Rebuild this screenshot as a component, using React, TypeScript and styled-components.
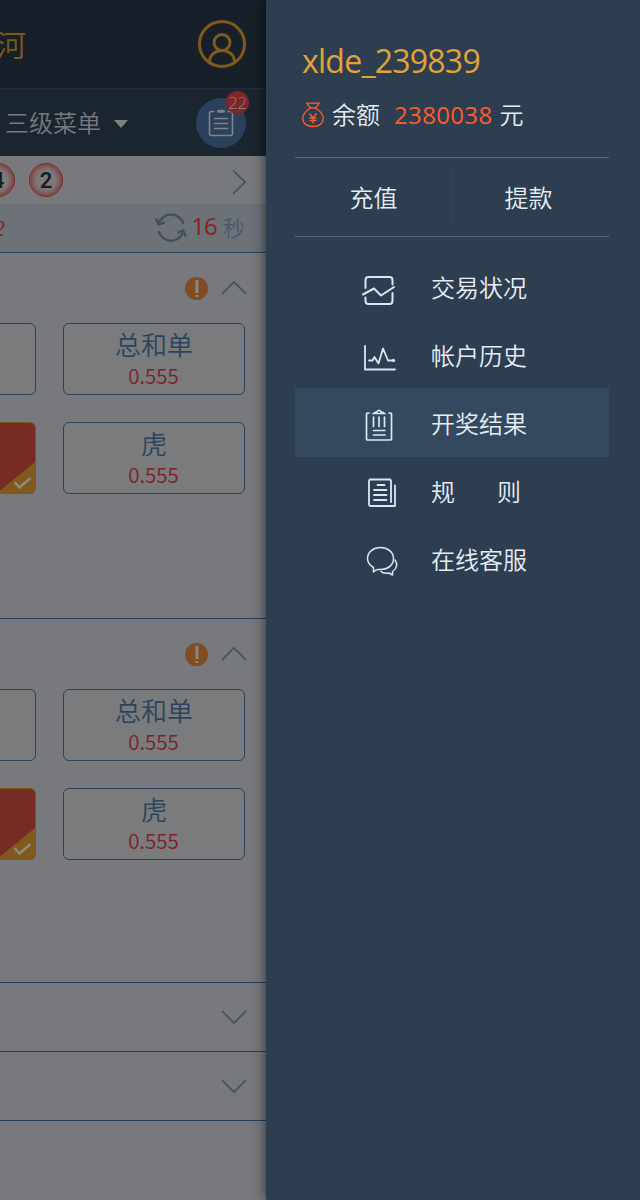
import React from "react";
import styled, { createGlobalStyle } from "styled-components";

const CJK = '"Noto Sans CJK SC", sans-serif';
const LATIN = '"Open Sans", "Noto Sans CJK SC", sans-serif';

const Global = createGlobalStyle`
  * { box-sizing: border-box; }
  body { margin: 0; background: #2d3e50; font-family: ${CJK}; font-weight: 350; }
  svg { display: block; flex: none; fill: none; }
`;

const Screen = styled.div`
  display: flex;
  width: 640px;
  height: 1200px;
  overflow: hidden;
`;

const Page = styled.div`
  width: 266px;
  flex: none;
  overflow: hidden;
  background: #77797d;
`;

const Header = styled.header`
  display: flex;
  align-items: center;
  justify-content: space-between;
  height: 88px;
  padding-right: 20px;
  background: #171f28;
`;

const Title = styled.div`
  margin: -2px 0 0 -4px;
  font-size: 30px;
  line-height: 40px;
  color: #80591c;
`;

const Nav = styled.nav`
  display: flex;
  align-items: center;
  height: 68px;
  padding: 1px 20px 0 5px;
  border-top: 1px solid #222e39;
  background: #1a252f;
`;

const NavLabel = styled.span`
  margin-top: -2px;
  font-size: 24px;
  line-height: 36px;
  color: #77797d;
`;

const Caret = styled.span`
  margin: 1px 0 0 13px;
  border: 7px solid transparent;
  border-top: 8px solid #80817f;
  border-bottom: 0;
`;

const Orders = styled.div`
  position: relative;
  display: flex;
  align-items: center;
  justify-content: center;
  width: 50px;
  height: 50px;
  margin-left: auto;
  border-radius: 50%;
  background: #2b405a;
`;

const Count = styled.span`
  position: absolute;
  top: -7px;
  right: -3px;
  width: 23px;
  height: 23px;
  border-radius: 50%;
  background: #802527;
  color: #8a8081;
  font: 350 17px/23px ${LATIN};
  letter-spacing: -0.5px;
  text-align: center;
`;

const Balls = styled.div`
  display: flex;
  align-items: flex-start;
  gap: 14px;
  height: 48px;
  padding: 7px 20px 0 0;
  margin-left: -19px;
`;

const Ball = styled.span`
  width: 34px;
  height: 34px;
  border-radius: 50%;
  border: 1px solid #7e2528;
  box-shadow: inset 0 0 6px 1px #842628;
  background: #7d7c7b;
  color: #171f27;
  font: 600 22px/33px Roboto, sans-serif;
  text-align: center;
`;

const BallsArrow = styled.span`
  margin: 6px 0 0 auto;
`;

const Strip = styled.div`
  display: flex;
  align-items: center;
  height: 49px;
  padding-right: 21px;
  border-bottom: 1px solid #27405a;
  background: #6c7278;
`;

const Issue = styled.span`
  margin: 0 auto 0 -7px;
  font: italic 24px/30px "Liberation Serif", serif;
  color: #842521;
`;

const Seconds = styled.span`
  margin: -4px 6px 0 4px;
  font: 400 24px/34px ${LATIN};
  letter-spacing: -0.8px;
  color: #85241c;
`;

const Unit = styled.span`
  margin-top: -4px;
  font-size: 22px;
  line-height: 34px;
  color: #4a5969;
`;

const Section = styled.section<{ $height: number }>`
  height: ${(p) => p.$height}px;
  border-bottom: 1px solid #27405a;
`;

const SectionHead = styled.div<{ $closed?: boolean }>`
  display: flex;
  align-items: center;
  justify-content: flex-end;
  gap: 13px;
  height: ${(p) => (p.$closed ? 68 : 70)}px;
  padding-right: 19px;
`;

const CardRow = styled.div`
  display: flex;
  justify-content: flex-end;
  gap: 27px;
  padding-right: 21px;
  margin-bottom: 27px;
`;

const Card = styled.div`
  flex: none;
  width: 182px;
  height: 72px;
  border: 1px solid #2a435f;
  border-radius: 6px;
  background: #797b7c;
  text-align: center;
`;

const PickedCard = styled(Card)`
  display: flex;
  align-items: flex-end;
  justify-content: flex-end;
  border-color: #83561c;
  background: #762b25;
  overflow: hidden;
`;

const CardName = styled.div`
  padding-top: 2px;
  font-size: 26px;
  line-height: 36px;
  color: #2c435f;
`;

const CardOdds = styled.div`
  padding-right: 1px;
  font-size: 20.5px;
  line-height: 27px;
  color: #7f2125;
`;

const Drawer = styled.aside`
  position: relative;
  width: 374px;
  flex: none;
  padding: 0 31px 0 29px;
  background: #2d3e50;
  box-shadow: 0 0 13px rgba(0, 0, 0, 0.65);
`;

const Account = styled.div`
  height: 157px;
  padding: 37px 0 0 7px;
`;

const UserName = styled.div`
  font: 400 32px/48px ${LATIN};
  letter-spacing: -0.75px;
  color: #e2a337;
`;

const Balance = styled.div`
  display: flex;
  align-items: center;
  height: 36px;
  margin-top: 12px;
  font-size: 24px;
  line-height: 36px;
  color: #e6edf6;
`;

const BalanceLabel = styled.span`
  margin: -2px 14px 0 8px;
`;

const Amount = styled.span`
  margin: -1px 7px 0 0;
  font: 400 24px/36px ${LATIN};
  letter-spacing: 0.35px;
  color: #ff5b2b;
`;

const Currency = styled.span`
  margin-top: -2px;
`;

const Actions = styled.div`
  display: flex;
  align-items: center;
  height: 80px;
  border: solid #56687a;
  border-width: 1px 0;
`;

const Action = styled.div`
  flex: none;
  width: 157px;
  height: 51px;
  padding-top: 7px;
  font-size: 24px;
  line-height: 36px;
  text-align: center;
  color: #e6edf6;

  & + & {
    padding-right: 6px;
  }

  &:first-child {
    width: 158px;
    border-right: 1px solid #35495f;
  }
`;

const Menu = styled.div`
  padding-top: 15px;
`;

const MenuItem = styled.div<{ $active?: boolean }>`
  display: flex;
  align-items: center;
  height: ${(p) => (p.$active ? 69 : 68)}px;
  margin-bottom: ${(p) => (p.$active ? -1 : 0)}px;
  padding-left: 66px;
  background: ${(p) => (p.$active ? "#34495e" : "transparent")};
`;

const MenuIcon = styled.span`
  width: 70px;
  padding-top: 7px;
`;

const MenuText = styled.span`
  display: flex;
  gap: 42px;
  padding-top: 1px;
  font-size: 24px;
  line-height: 36px;
  color: #e6edf6;
`;

const UserIcon = () => (
  <svg width="48" height="48" stroke="#80591c" strokeWidth="3">
    <circle cx="24" cy="24" r="22.5" />
    <circle cx="24" cy="22.5" r="8" />
    <path d="M11.5 42C11.5 35 17 30.5 24 30.5S36.500 35 36.500 42" />
  </svg>
);

const OrdersIcon = () => (
  <svg width="26" height="28" stroke="#808486" strokeWidth="1.6" strokeLinecap="round">
    <path d="M6 2.500H3.500Q1.500 2.500 1.500 4.500V24.500Q1.500 26.500 3.500 26.500H22.500Q24.500 26.500 24.500 24.500V4.500Q24.500 2.500 22.500 2.500H20" />
    <path d="M10.500 2.300H15.500" strokeWidth="3" />
    <path d="M6.500 9.500H19.500M6.500 14.500H19.500M6.500 19.500H19.500" />
  </svg>
);

const RefreshIcon = () => (
  <svg width="32" height="30" stroke="#434f5b" strokeWidth="2.400">
    <path d="M3.500 11A13 13 0 0 1 28.500 11M28.500 18.500A13 13 0 0 1 3.500 18" />
    <path d="M1 5.500L3.500 11.500L9.500 9.500M31 24L28 17.500L22.500 20" />
  </svg>
);

const Chevron = ({ down }: { down?: boolean }) => (
  <svg width="26" height="16" stroke="#434f5b" strokeWidth="1.600">
    <path d={down ? "M1 2L13 14L25 2" : "M1 14L13 2L25 14"} />
  </svg>
);

const AlertIcon = () => (
  <svg width="23" height="23">
    <circle cx="11.500" cy="11.500" r="11.500" fill="#804c24" />
    <path d="M11.900 3V16M11.900 18V20" stroke="#8b8580" strokeWidth="3" />
  </svg>
);

const PickedCorner = () => (
  <svg width="38" height="31">
    <path d="M38 0V31H0Z" fill="#81591c" />
    <path d="M17.500 20L22.500 25.500L33.500 16" stroke="#8d8b84" strokeWidth="2.400" />
  </svg>
);

const MoneyBag = () => (
  <svg width="22" height="26" stroke="#ff5b2b" strokeWidth="1.300" strokeLinejoin="round">
    <path d="M4.500 1.200H17.500L13.500 6H8.500ZM8.500 6C4.500 8.500 .8 12 .8 16.500C.8 21.500 5 24.500 11 24.500S21.200 21.500 21.200 16.500C21.200 12 17.500 8.500 13.500 6" />
    <path d="M7.500 11.500L11 16L14.500 11.500M7.500 16H14.500M7.500 18.500H14.500M11 16V21.500" />
  </svg>
);

const line = {
  stroke: "#dbe6f3",
  strokeWidth: 1.8,
  strokeLinecap: "round" as const,
  strokeLinejoin: "round" as const,
};

const TradeIcon = () => (
  <svg width="36" height="32" {...line} strokeWidth={2}>
    <path d="M4.500 14V6Q4.500 3 7.500 3H28.500Q31.500 3 31.500 6V10.500M4.500 23.500V27Q4.500 30 7.500 30H28.500Q31.500 30 31.500 27V19" />
    <path d="M2 20.500L13 14.500L20 21.500L33 13" />
  </svg>
);

const HistoryIcon = () => (
  <svg width="36" height="32" {...line}>
    <path d="M4 4V27.500H34" />
    <path d="M8 18.500H11.500L13.500 15L17.500 21.500L22 6.500L27 18.500H33" />
    <circle cx="32.500" cy="18.500" r="1.200" fill="#dbe6f3" strokeWidth="1" />
  </svg>
);

const ResultIcon = () => (
  <svg width="36" height="34" {...line} strokeWidth={1.7}>
    <path d="M8 4H6.500Q5.500 4 5.500 5V30Q5.500 31 6.500 31H29.500Q30.500 31 30.500 30V5Q30.500 4 29.500 4H28" />
    <path d="M12 4.500H24M13.500 3.800L16 2.800Q18 -.3 20 2.800L22.500 3.800" />
    <path d="M12.500 8V17.500M18 8V17.500M23.500 8V17.500M12.500 21.500H24M12.500 26H24" />
  </svg>
);

const RulesIcon = () => (
  <svg width="36" height="32" {...line}>
    <path d="M30 24V3Q30 1.500 28.500 1.500H9.500Q8 1.500 8 3V26.500Q8 28 9.500 28H34V7.500" />
    <path d="M16.500 7H23.500M13 12H25.500M13 17H25.500M13 22H25.500" />
  </svg>
);

const ChatIcon = () => (
  <svg width="38" height="32" {...line} strokeWidth={1.5}>
    <path d="M12.500 26V21.500C8.500 19 6.500 16 6.500 12.500C6.500 6 12.500 1.500 19.500 1.500S32.500 6 32.500 12.500S27 23.500 20 23.500H17Q15 23.500 12.500 26Z" />
    <path d="M34 14C37 18 36 22.500 31.500 25.500V29L28 27C24.500 27.500 21.500 27 20 25.500" />
  </svg>
);

const menu = [
  { words: ["交易状况"], icon: <TradeIcon /> },
  { words: ["帐户历史"], icon: <HistoryIcon /> },
  { words: ["开奖结果"], icon: <ResultIcon />, active: true },
  { words: ["规", "则"], icon: <RulesIcon /> },
  { words: ["在线客服"], icon: <ChatIcon /> },
];

const BetSection = ({ height }: { height: number }) => (
  <Section $height={height}>
    <SectionHead>
      <AlertIcon />
      <Chevron />
    </SectionHead>
    <CardRow>
      <Card />
      <Card>
        <CardName>总和单</CardName>
        <CardOdds>0.555</CardOdds>
      </Card>
    </CardRow>
    <CardRow>
      <PickedCard>
        <PickedCorner />
      </PickedCard>
      <Card>
        <CardName>虎</CardName>
        <CardOdds>0.555</CardOdds>
      </Card>
    </CardRow>
  </Section>
);

const ClosedSection = () => (
  <Section $height={69}>
    <SectionHead $closed>
      <Chevron down />
    </SectionHead>
  </Section>
);

export default function App() {
  return (
    <Screen>
      <Global />
      <Page>
        <Header>
          <Title>河</Title>
          <UserIcon />
        </Header>
        <Nav>
          <NavLabel>三级菜单</NavLabel>
          <Caret />
          <Orders>
            <OrdersIcon />
            <Count>22</Count>
          </Orders>
        </Nav>
        <Balls>
          <Ball>4</Ball>
          <Ball>2</Ball>
          <BallsArrow>
            <svg width="14" height="26" stroke="#434f5b" strokeWidth="1.600">
              <path d="M1 1.500L13 13L1 25" />
            </svg>
          </BallsArrow>
        </Balls>
        <Strip>
          <Issue>2</Issue>
          <RefreshIcon />
          <Seconds>16</Seconds>
          <Unit>秒</Unit>
        </Strip>
        <BetSection height={366} />
        <BetSection height={364} />
        <ClosedSection />
        <ClosedSection />
      </Page>
      <Drawer>
        <Account>
          <UserName>xlde_239839</UserName>
          <Balance>
            <MoneyBag />
            <BalanceLabel>余额</BalanceLabel>
            <Amount>2380038</Amount>
            <Currency>元</Currency>
          </Balance>
        </Account>
        <Actions>
          <Action>充值</Action>
          <Action>提款</Action>
        </Actions>
        <Menu>
          {menu.map((item) => (
            <MenuItem key={item.words.join("")} $active={item.active}>
              <MenuIcon>{item.icon}</MenuIcon>
              <MenuText>
                {item.words.map((word) => (
                  <span key={word}>{word}</span>
                ))}
              </MenuText>
            </MenuItem>
          ))}
        </Menu>
      </Drawer>
    </Screen>
  );
}
